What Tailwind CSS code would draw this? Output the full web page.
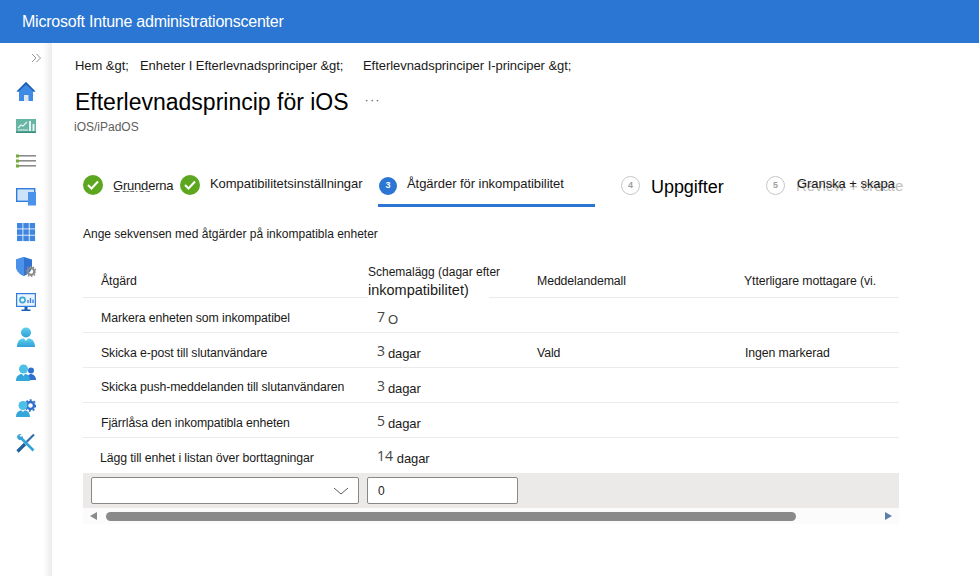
<!DOCTYPE html>
<html lang="sv">
<head>
  <meta charset="UTF-8" />
  <title>Microsoft Intune administrationscenter</title>
  <script src="https://cdn.jsdelivr.net/npm/@tailwindcss/browser@4"></script>
</head>
<body class="w-[979px] h-[576px] overflow-hidden bg-white font-['Liberation_Sans',sans-serif] text-[#1b1a19]">

  <!-- Top bar -->
  <header class="h-[43px] bg-[#2b76d2] flex items-center pl-[22px] text-white text-[16px] tracking-[-0.23px]">Microsoft Intune administrationscenter</header>

  <div class="flex h-[533px]">
    <!-- Sidebar -->
    <aside class="w-[52px] shrink-0 bg-gradient-to-r from-white from-[82%] to-[#ececec] flex flex-col items-center">
      <svg class="ml-[20px] mt-[10px] mb-[18px]" width="11" height="10" viewBox="0 0 11 10" fill="none" stroke="#8a8a8a" stroke-width="0.9"><path d="M1 1l4 4-4 4M5.5 1l4 4-4 4"/></svg>
      <div class="flex flex-col gap-[15.2px] pr-[1px]">
        <!-- home -->
        <svg width="20" height="20" viewBox="0 0 20 20"><path d="M10 1L0.5 10.5H3V20H17V10.500H19.500Z" fill="#3f8ae5"/><path d="M10 1L0.500 10.500H2.500L10 3.500 17.500 10.500H19.500Z" fill="#1d5fb0"/><rect x="8" y="14" width="4.500" height="6" fill="#dfe6ee"/></svg>
        <!-- chart -->
        <svg width="20" height="20" viewBox="0 0 20 20"><rect y="3" width="20" height="14" fill="#66b5a5"/><rect y="15.500" width="20" height="1.500" fill="#3e8e80"/><path d="M2 12l3-3 2 1 4-4" stroke="#e6f4f1" stroke-width="1.200" fill="none"/><path d="M2 14H12" stroke="#e6f4f1"/><rect x="13" y="5" width="2" height="10" fill="#e6f4f1"/><rect x="16.500" y="8" width="2" height="7" fill="#e6f4f1"/></svg>
        <!-- list -->
        <svg width="20" height="20" viewBox="0 0 20 20"><g fill="#8c8c8c"><rect x="3" y="4" width="17" height="1.600"/><rect x="3" y="9" width="17" height="1.600"/><rect x="3" y="14" width="17" height="1.600"/></g><g fill="#6fae2e"><rect y="3.500" width="3" height="3"/><rect y="8.500" width="3" height="3"/><rect y="13.500" width="3" height="3"/></g></svg>
        <!-- devices -->
        <svg width="20" height="20" viewBox="0 0 20 20"><rect x="0.700" y="1.700" width="18" height="12.600" fill="#cfe3f8" stroke="#2f7de0" stroke-width="1.400"/><rect x="12" y="5" width="8" height="13.500" fill="#4a92ea"/></svg>
        <!-- grid -->
        <svg width="20" height="20" viewBox="0 0 20 20" fill="#3f86e0"><rect x="1" y="1" width="5.500" height="5.500"/><rect x="7.300" y="1" width="5.500" height="5.500"/><rect x="13.600" y="1" width="5.500" height="5.500"/><rect x="1" y="7.300" width="5.500" height="5.500"/><rect x="7.300" y="7.300" width="5.500" height="5.500"/><rect x="13.600" y="7.300" width="5.500" height="5.500"/><rect x="1" y="13.600" width="5.500" height="5.500"/><rect x="7.300" y="13.600" width="5.500" height="5.500"/><rect x="13.600" y="13.600" width="5.500" height="5.500"/></svg>
        <!-- shield -->
        <svg width="20" height="20" viewBox="0 0 20 20"><path d="M8 0L0 2.500V9C0 14 4 17.500 8 19 12 17.500 16 14 16 9V2.500Z" fill="#2f72d0"/><path d="M8 0V19C4 17.500 0 14 0 9V2.500Z" fill="#4b93ea"/><circle cx="15" cy="14.500" r="3.300" fill="none" stroke="#8a8a8a" stroke-width="2.200"/><circle cx="15" cy="14.500" r="5" fill="none" stroke="#8a8a8a" stroke-width="1.200" stroke-dasharray="1.500 1.600"/></svg>
        <!-- monitor -->
        <svg width="20" height="20" viewBox="0 0 20 20"><rect x="0.600" y="1.600" width="18.800" height="12.800" fill="#eaf3fb" stroke="#2f7de0" stroke-width="1.200"/><circle cx="6.500" cy="8" r="2.600" fill="none" stroke="#39a9d8" stroke-width="1.600"/><path d="M12 11V8M14.500 11V6M17 11V7.500" stroke="#2f7de0" stroke-width="1.300"/><path d="M8.500 15h3v2.500h3v1.500h-9v-1.500h3z" fill="#1d5fb0"/></svg>
        <!-- user -->
        <svg width="20" height="20" viewBox="0 0 20 20"><defs><linearGradient id="u" x1="0" y1="0" x2="0" y2="1"><stop offset="0" stop-color="#5dd0ee"/><stop offset="1" stop-color="#2f9fd6"/></linearGradient></defs><circle cx="10" cy="5.500" r="5" fill="url(#u)"/><path d="M1 20C1 14 4 11.500 8 11.500L10 14 12 11.500C16 11.500 19 14 19 20Z" fill="url(#u)"/></svg>
        <!-- users -->
        <svg width="20" height="20" viewBox="0 0 20 20"><circle cx="15" cy="7.500" r="3" fill="#2f6fd0"/><path d="M11 17C11 13 13 11 15 11S20 13 20 17Z" fill="#2f6fd0"/><circle cx="7.500" cy="6" r="4.500" fill="#4cc0e6"/><path d="M0 18C0 13 3 11 6 11L7.500 13 9 11C12 11 14 13 14 18Z" fill="#34a6da"/></svg>
        <!-- user settings -->
        <svg width="20" height="20" viewBox="0 0 20 20"><circle cx="14.500" cy="7.500" r="3.500" fill="none" stroke="#2f6fd0" stroke-width="2.400"/><circle cx="14.500" cy="7.500" r="5.400" fill="none" stroke="#2f6fd0" stroke-width="1.600" stroke-dasharray="2 2"/><circle cx="7" cy="7.500" r="4.500" fill="#4cc0e6"/><path d="M0 19C0 14 3 12.500 5.500 12.500L7 14 8.500 12.500C11 12.500 14 14 14 19Z" fill="#34a6da"/></svg>
        <!-- tools -->
        <svg width="20" height="20" viewBox="0 0 20 20" fill="none"><path d="M18 1.500L9 10.500" stroke="#2f6fb0" stroke-width="2.200"/><path d="M1.500 18.500L9 11" stroke="#1f5f9f" stroke-width="3.200"/><path d="M4 4L17.500 17.500" stroke="#36a3d8" stroke-width="2.600"/><path d="M1 4.500C1 2 3 0.500 5.500 1L3.500 3 5 5 7 3C7.500 5.500 5.500 7.500 3 7" fill="#36a3d8"/></svg>
      </div>
    </aside>

    <!-- Main -->
    <main class="flex-1 min-w-0 pl-[23px]">
      <nav class="h-[44px] flex items-center text-[13px] tracking-[-0.05px] pt-[1px]">
        <span class="w-[65px]">Hem &amp;gt;</span>
        <span class="w-[223px]">Enheter I Efterlevnadsprinciper &amp;gt;</span>
        <span>Efterlevnadsprinciper I-principer &amp;gt;</span>
      </nav>
      <div class="flex items-center h-[32px] mt-[-1px]">
        <h1 class="text-[23px] leading-[28px] text-black">Efterlevnadsprincip för iOS</h1>
        <span class="ml-[16px] mb-[6px] text-[13px] leading-none tracking-[1px] text-[#605e5c]">···</span>
      </div>
      <div class="text-[12px] leading-[16px] text-[#605e5c] mt-[1px] ml-[-1px]">iOS/iPadOS</div>

      <!-- Wizard steps -->
      <div class="flex h-[68px] mt-[8px] w-[826px] text-[13px] tracking-[-0.05px]">
        <div class="relative w-[105px] flex items-start pl-[8px] pt-[32px]">
          <span class="w-[20px] h-[20px] rounded-full bg-[#5ca71f] flex items-center justify-center shrink-0"><svg width="12" height="10" viewBox="0 0 12 10" fill="none" stroke="white" stroke-width="2"><path d="M1 5l3.500 3.500L11 1.500"/></svg></span>
          <span class="ml-[10px] mt-[1px] tracking-[-0.2px]">Grunderna</span>
          <span class="absolute left-[38px] top-[48px] h-[4px] overflow-hidden text-[#555] text-[13px] leading-[14px]"><span class="block mt-[-10px]">Basics</span></span>
        </div>
        <div class="w-[198px] flex items-start pt-[32px]">
          <span class="w-[20px] h-[20px] rounded-full bg-[#5ca71f] flex items-center justify-center shrink-0"><svg width="12" height="10" viewBox="0 0 12 10" fill="none" stroke="white" stroke-width="2"><path d="M1 5l3.500 3.500L11 1.500"/></svg></span>
          <span class="ml-[10px] mt-[-1px]">Kompatibilitetsinställningar</span>
        </div>
        <div class="w-[217px] flex items-start border-b-[3px] border-[#2b76d2] h-[65px] mt-[-1px] pt-[35px]">
          <span class="ml-[1px] w-[18px] h-[18px] rounded-full bg-[#2b76d2] text-white text-[9px] font-bold flex items-center justify-center shrink-0">3</span>
          <span class="ml-[10px] mt-[-3px]">Åtgärder för inkompatibilitet</span>
        </div>
        <div class="w-[145px] pl-[26px] flex items-start pt-[33px]">
          <span class="w-[19px] h-[19px] rounded-full border border-[#c8c6c4] text-[#a19f9d] text-[9px] font-bold flex items-center justify-center shrink-0">4</span>
          <span class="ml-[11px] mt-[1px] text-[18px] leading-[20px] text-black">Uppgifter</span>
        </div>
        <div class="relative flex-1 flex items-start pl-[26px] pt-[33px]">
          <span class="w-[19px] h-[19px] rounded-full border border-[#c8c6c4] text-[#a19f9d] text-[9px] font-bold flex items-center justify-center shrink-0">5</span>
          <span class="absolute left-[56px] top-[35px] w-[107px] h-[16px] overflow-hidden whitespace-nowrap text-[#c0bebc] text-[15px] leading-[16px]">Review + create</span>
          <span class="relative ml-[12px] mt-[-2px]">Granska + skapa</span>
        </div>
      </div>

      <p class="text-[12px] leading-[16px] ml-[8px] mt-[15px]">Ange sekvensen med åtgärder på inkompatibla enheter</p>

      <!-- Actions table -->
      <div class="w-[816px] ml-[8px] mt-[17px] text-[12.3px] tracking-[-0.1px]">
        <div class="grid grid-cols-[285px_169px_207px_155px] h-[39px] border-b border-[#edebe9]">
          <div class="pl-[18px] pt-[13px]">Åtgärd</div>
          <div class="relative w-[121px] h-[39px] bg-white pt-[6px] leading-[14px] tracking-[0px]"><span class="text-[12px] whitespace-nowrap">Schemalägg (dagar efter</span><br><span class="text-[14.5px] leading-[22px]">inkompatibilitet)</span></div>
          <div class="pt-[13px]">Meddelandemall</div>
          <div class="pt-[13px]">Ytterligare mottagare (vi.</div>
        </div>
        <div class="grid grid-cols-[285px_169px_207px_155px] h-[35px] border-b border-[#edebe9] items-center">
          <div class="pl-[18px] pt-[7px]">Markera enheten som inkompatibel</div>
          <div class="pl-[9px] pt-[5px]"><span class="text-[14px] text-[#444] font-['Open_Sans',sans-serif] mr-[3px] align-[2px]">7</span><span class="text-[13px] text-[#444]">O</span></div><div></div><div></div>
        </div>
        <div class="grid grid-cols-[285px_169px_207px_155px] h-[35px] border-b border-[#edebe9] items-center">
          <div class="pl-[18px] pt-[7px]">Skicka e-post till slutanvändare</div>
          <div class="pl-[9px] pt-[4px]"><span class="text-[14px] text-[#444] font-['Open_Sans',sans-serif] mr-[3px] align-[2px]">3</span><span class="text-[13px]">dagar</span></div>
          <div class="pt-[7px]">Vald</div><div class="pt-[7px] pl-[1px]">Ingen markerad</div>
        </div>
        <div class="grid grid-cols-[285px_169px_207px_155px] h-[35px] border-b border-[#edebe9] items-center">
          <div class="pl-[18px] pt-[5px]">Skicka push-meddelanden till slutanvändaren</div>
          <div class="pl-[9px] pt-[3px]"><span class="text-[14px] text-[#444] font-['Open_Sans',sans-serif] mr-[3px] align-[2px]">3</span><span class="text-[13px]">dagar</span></div><div></div><div></div>
        </div>
        <div class="grid grid-cols-[285px_169px_207px_155px] h-[35px] border-b border-[#edebe9] items-center">
          <div class="pl-[18px] pt-[7px]">Fjärrlåsa den inkompatibla enheten</div>
          <div class="pl-[9px] pt-[4px]"><span class="text-[14px] text-[#444] font-['Open_Sans',sans-serif] mr-[3px] align-[2px]">5</span><span class="text-[13px]">dagar</span></div><div></div><div></div>
        </div>
        <div class="grid grid-cols-[285px_169px_207px_155px] h-[35px] items-center">
          <div class="pl-[17px] pt-[5px]">Lägg till enhet i listan över borttagningar</div>
          <div class="pl-[9px] pt-[3px]"><span class="text-[14px] text-[#444] font-['Open_Sans',sans-serif] mr-[4px] align-[2px]">14</span><span class="text-[13px]">dagar</span></div><div></div><div></div>
        </div>
        <!-- Add row -->
        <div class="h-[35px] bg-[#ebeae8] flex items-center pl-[8px] gap-[8px]">
          <div class="w-[268px] h-[27px] bg-white border border-[#8a8886] rounded-[2px] flex items-center justify-end pr-[9px]">
            <svg width="16" height="8" viewBox="0 0 16 8" fill="none" stroke="#605e5c"><path d="M1 1l7 6 7-6"/></svg>
          </div>
          <div class="w-[151px] h-[27px] bg-white border border-[#8a8886] rounded-[2px] flex items-center pl-[10px] text-[12px]">0</div>
        </div>
        <!-- Scrollbar -->
        <div class="h-[16px] bg-[#fbfbfb] flex items-center pl-[7px] pr-[7px]">
          <span class="w-0 h-0 border-y-[4px] border-y-transparent border-r-[7px] border-r-[#8a8a8a]"></span>
          <span class="ml-[9px] w-[690px] h-[9px] rounded-full bg-[#8a8a8a]"></span>
          <span class="ml-auto w-0 h-0 border-y-[4px] border-y-transparent border-l-[7px] border-l-[#5b7fa8]"></span>
        </div>
      </div>
    </main>
  </div>
</body>
</html>
